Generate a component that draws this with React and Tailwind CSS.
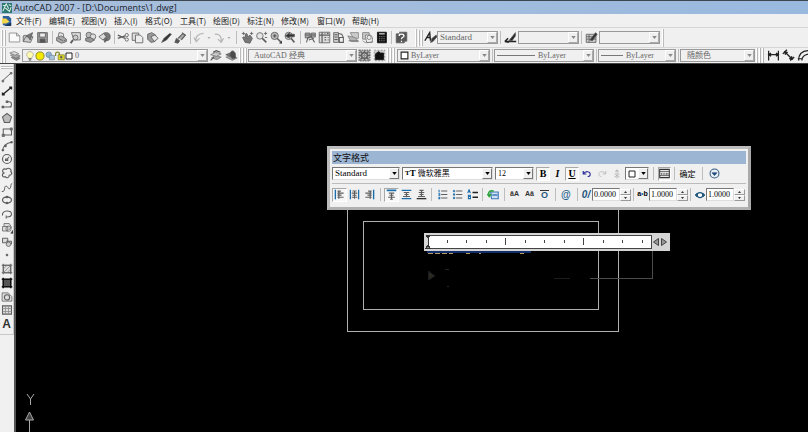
import React from "react";

const cx = (...v) => v.filter(Boolean).join(" ");

/* all glyphs live on a 16 x 16 grid */
const GLYPHS = {
  new: <path d="M1.500 2.500h9l4 3.500v7.500h-13z M10.500 2.500V6h4" fill="#fafafa" stroke="#858585" />,
  open: (
    <>
      <path d="M1.500 13V6l3-1 1 1h5v2M1.500 13l3-6h9l-3 7z" fill="#ccc" />
      <path d="M5 6l8-4-3 9-2-3z" fill="#777" />
    </>
  ),
  save: (
    <>
      <path d="M2 2h12v12H2z" fill="#999" />
      <path d="M4.500 2.500h7v5h-7z" fill="#eee" />
      <path d="M5 10h6v4H5z" fill="#555" />
    </>
  ),
  print: (
    <>
      <path d="M4 7l1-5 5 1 1 5" fill="#eee" />
      <path d="M2 8l6-2 6 4v3l-6 2-6-3z" fill="#aaa" />
      <path d="M4 9l6 3M11 12l2-1" />
    </>
  ),
  preview: (
    <>
      <path d="M3 2h11v9H6z" fill="#ddd" />
      <circle cx="8" cy="8" r="3" fill="#ccc" />
      <path d="M5 11l-3 4" strokeWidth="2.400" />
    </>
  ),
  publish: (
    <>
      <circle cx="6" cy="5" r="3.500" fill="#bbb" />
      <circle cx="11" cy="7" r="3.500" fill="#ddd" />
      <path d="M2 9l6-1 5 3-5 3-6-2z" fill="#999" />
    </>
  ),
  globe: (
    <>
      <circle cx="10" cy="7" r="5" fill="#777" />
      <path d="M1 7l6-4 3 4-4 4z" fill="#ddd" />
      <path d="M8 14l3-5" strokeWidth="2" />
    </>
  ),
  cut: (
    <>
      <path d="M1 5l9 4M1 9l9-3" strokeWidth="1.600" />
      <circle cx="12" cy="5" r="2" />
      <circle cx="12" cy="10.500" r="2" />
    </>
  ),
  copy: (
    <>
      <path d="M1.500 2.500h8v9h-8z" fill="#ddd" />
      <path d="M5.500 5h6l3 3v6.500h-9z" fill="#eee" />
    </>
  ),
  paste: (
    <>
      <path d="M2 4l5-2 5 3-1 8-5 1-4-4z" fill="#999" />
      <path d="M6 7l5-2 4 4-5 4z" fill="#e5e5e5" />
    </>
  ),
  match: <path d="M2 14l3-5 7-6 2 1-6 7z" fill="#333" />,
  brush: (
    <>
      <path d="M1 14l2-5 4 3-2 3z" fill="#555" />
      <path d="M5 9l6-6 3 2-5 6M10 2l4 4" fill="#aaa" strokeWidth="1.500" />
    </>
  ),
  undoGrey: <path d="M4 14C2 7 7 3 13 3M1 8l3 5 4-4" stroke="#b5b5b5" strokeWidth="1.500" />,
  redoGrey: <path d="M2 4c6-1 9 3 8 9M6 10l4 4 3-5" stroke="#b5b5b5" strokeWidth="1.500" />,
  pan: (
    <>
      <path d="M5 14L2 8l2-1 2 2-1-5 2-1 2 4 2-2 3 4-3 6z" fill="#777" />
      <path d="M1 3h4M3 1v4M11 3h4M13 1v4" />
    </>
  ),
  zoomIn: (
    <>
      <circle cx="6" cy="6" r="4" fill="#e5e5e5" />
      <path d="M9 9l5 5" strokeWidth="2" />
      <path d="M11 3h4M13 1v4M12 8h3" />
    </>
  ),
  zoomWin: (
    <>
      <circle cx="7" cy="6" r="4.500" fill="#bbb" />
      <path d="M5 6h4M7 4v4M10 9l5 5" strokeWidth="1.800" />
      <path d="M13 15h3v-3z" fill="#111" />
    </>
  ),
  zoomPrev: (
    <>
      <circle cx="7" cy="6" r="4.500" fill="#ccc" />
      <path d="M10 9l4 5" strokeWidth="2" />
      <path d="M3 6l5-4v2h6v3H8v2z" fill="#333" />
    </>
  ),
  props: (
    <>
      <path d="M1.500 2.500h6v6h-6zM9 2.500h5v5H9z" fill="#aaa" />
      <path d="M3 14l2-6 4-1 4 7M1 5h13M6 11l6-2" strokeWidth="1.300" />
    </>
  ),
  design: (
    <>
      <path d="M1.500 1.500h13v13h-13z" fill="#ddd" />
      <path d="M1.500 5h13M5 1.500v13M8 8h2M12 8h1M8 11h2M12 11h1M8 3h1M11 3h2" strokeWidth="1.500" />
    </>
  ),
  palette: (
    <>
      <path d="M2 2h6v12H2z" fill="#ccc" />
      <path d="M3 4.500h4M3 7.500h4M3 10.500h4M8 3l4 1 2 4M14 14H9V8h5z" strokeWidth="1.300" />
    </>
  ),
  sheetset: (
    <g stroke="#808080">
      <path d="M4 2h10v7H8z" fill="#ccc" />
      <path d="M1 6l9 2 4 5H5z" fill="#b5b5b5" />
      <path d="M2 12h12" strokeWidth="1.500" />
    </g>
  ),
  markup: (
    <g stroke="#777">
      <path d="M2 2h8v8H2z" fill="#ccc" />
      <path d="M5 5h7l2 3v6H7z" fill="#eee" />
      <circle cx="10" cy="8" r="2.500" />
      <path d="M2 12c3 3 7 3 12 1" />
    </g>
  ),
  calc: (
    <>
      <path d="M3 1.500h11v13H3z" fill="#111" stroke="#111" />
      <path d="M5 3.500h7" stroke="#ddd" strokeWidth="1.500" />
      <path d="M5 7h7M5 9.500h7M5 12h7" stroke="#999" strokeDasharray="1.500 1.200" />
    </>
  ),
  help: (
    <>
      <path d="M1.500 3.500h10v11h-10zM5 1.500h9.500v11H12" fill="#555" />
      <path d="M5 6c0-3 6-3 6 0 0 2-3 1.500-3 4M8 12v1.500" stroke="#fff" strokeWidth="1.600" />
    </>
  ),
  textStyle: (
    <>
      <path d="M1 12L7 2l1 10M4 8h4" stroke="#222" strokeWidth="1.700" />
      <path d="M8 14l2-5 5-4 1 2-5 6z" fill="#333" />
    </>
  ),
  dimStyle: (
    <>
      <path d="M1 13h14M1 13l4-4M1 13l5 1" stroke="#222" strokeWidth="1.800" />
      <path d="M6 12l8-10v4l-4 6z" fill="#222" />
    </>
  ),
  tableStyle: (
    <>
      <path d="M1.500 4h12v10h-12zM1.500 7h12M5 4v10M1.500 10h12" fill="#ccc" />
      <path d="M6 11l7-9 2 2-6 8z" fill="#333" />
    </>
  ),
  layers: (
    <g stroke="#777">
      <path d="M3 10l6-2 6 3-5 3z" fill="#888" />
      <path d="M2 7l6-2 7 3-6 3z" fill="#aaa" />
      <path d="M1 4l6-2 6 3-5 2z" fill="#ddd" />
    </g>
  ),
  layerPrev: (
    <g stroke="#777">
      <path d="M3 11l5-3 7 2-5 3z" fill="#aaa" />
      <path d="M2 7l6-3 7 2-6 3z" fill="#ccc" />
      <path d="M5 4l4-2 5 2M2 14l4-4" stroke="#555" strokeWidth="1.500" />
    </g>
  ),
  layerState: (
    <>
      <path d="M1 10l6-2 8 3-6 3z" fill="#999" stroke="#888" />
      <path d="M6 8c0-8 7-7 7 0v3l-4 1z" fill="#4a4a4a" />
      <path d="M1 7l5-2v4z" fill="#777" />
    </>
  ),
  bulb: (
    <>
      <path d="M5 10C0 6 4 1 8 1s8 5 3 9v2H5z" fill="#fffbb0" stroke="#998" />
      <path d="M6 12.500h4M6 14.500h4" stroke="#555" strokeWidth="1.500" />
    </>
  ),
  sun: <circle cx="8" cy="8" r="6.500" fill="#f5e800" stroke="#8b8a30" strokeWidth="1.500" />,
  freeze: (
    <>
      <circle cx="6" cy="6" r="4.500" fill="#8fb4d4" stroke="#5d7b97" />
      <path d="M7 7h8v7H7z" fill="#a9c4da" stroke="#6c8294" />
    </>
  ),
  lock: (
    <>
      <path d="M1 8V4c0-3 6-3 6 0v3" stroke="#888833" strokeWidth="2" />
      <path d="M5 6h10v8H5z" fill="#dcd92b" stroke="#77751e" />
      <circle cx="10" cy="10" r="1.500" fill="#555" />
    </>
  ),
  swatch: <path d="M2 2h12v12H2z" fill="#fff" stroke="#222" strokeWidth="2" />,
  gear: (
    <>
      <path d="M1.500 1.500h13v13h-13z" fill="#bbb" stroke="#777" strokeDasharray="2 1" strokeWidth="2" />
      <path d="M3 3l10 10M13 3L3 13M8 2v12M2 8h12" strokeWidth="1.800" />
      <circle cx="8" cy="8" r="3.500" fill="#ccc" strokeWidth="1.800" />
      <circle cx="8" cy="8" r="1" />
    </>
  ),
  myspace: (
    <>
      <path d="M1.500 1.500h13v13h-13z" fill="#ccc" stroke="#888" strokeDasharray="2 2" />
      <path d="M3 13V6l3-2 1-1 2 2h4v8z" fill="#111" stroke="#111" />
    </>
  ),
  dimLinear: <path d="M2 2v12M14 2v12M2 7h12M5 5L2 7l3 2M11 5l3 2-3 2" stroke="#222" strokeWidth="1.500" />,
  dimAligned: (
    <>
      <path d="M1 6l5-5M10 14l5-4M4 4l8 8" stroke="#222" strokeWidth="1.700" />
      <path d="M3 3l4 1-3 3zM13 13l-4-1 3-3z" fill="#222" stroke="#222" />
    </>
  ),
  dimArc: <path d="M2 14C2 6 6 2 15 2M6 14c0-4 3-7 9-8M1 12h6" stroke="#222" strokeWidth="1.500" />,
  line: <path d="M2 13L13 3M1.500 12.500h2v2h-2zM12.500 2h2v2h-2z" strokeWidth="1.300" />,
  xline: <path d="M2 13L14 3M2 10v3h3M11 3h3v3" stroke="#222" strokeWidth="1.800" />,
  pline: <path d="M2 12h12M8 5h3c4 0 4 7 0 7M1.500 11h2v2h-2zM7 4h2v2H7z" strokeWidth="1.400" />,
  polygon: <path d="M8 2l6 4.500-2.500 7.500h-7L2 6.500z" fill="#bbb" strokeWidth="1.400" />,
  rect: (
    <>
      <path d="M3 4h11v8H3z" strokeWidth="1.400" />
      <path d="M1.500 11h3v3h-3zM12.500 2.500h2.500v3h-2.500z" fill="#777" />
    </>
  ),
  arc: (
    <>
      <path d="M2 14C3 8 7 4 14 3" strokeWidth="1.400" />
      <path d="M1.500 12.500h2v2h-2zM5 7h2v2H5zM13 2h2v2h-2z" fill="#444" />
    </>
  ),
  circle: (
    <>
      <circle cx="8" cy="8" r="6" strokeWidth="1.500" />
      <path d="M7 9l4-4M6 8h3v2H6z" strokeWidth="1.400" />
    </>
  ),
  cloud: <path d="M4 8C0 6 3 1 7 3c3-3 8 0 6 3 3 3 0 5-2 5 0 4-4 4-5 2-4 1-6-3-2-5z" strokeWidth="1.500" />,
  spline: <path d="M1 14c6 1 2-8 6-7 3 0 2 5 5 3 2-2 0-6 3-7" strokeWidth="1.300" />,
  ellipse: (
    <>
      <ellipse cx="8" cy="8" rx="6" ry="4" strokeWidth="1.700" />
      <path d="M7 3h2v2H7zM7 11h2v2H7z" fill="#444" />
    </>
  ),
  ellipseArc: <path d="M2 9c-1-6 12-7 12-1 0 3-3 4-6 4M7 10v4M2 8v2" strokeWidth="1.500" />,
  insert: (
    <>
      <path d="M2 6h7v6H2zM4 6V2h7l3 5-4 4" fill="#ddd" />
      <circle cx="10" cy="9" r="3.500" />
      <path d="M13 15h3v-4z" fill="#111" />
    </>
  ),
  block: (
    <>
      <path d="M2 3h7v6H2zM7 7h7v4" fill="#ddd" strokeWidth="1.300" />
      <circle cx="10" cy="11" r="3" fill="#ccc" />
    </>
  ),
  point: <path d="M7 7h2v2H7z" fill="#333" />,
  hatch: (
    <>
      <path d="M3 3h10v10H3z" fill="#ddd" />
      <path d="M3 1v14M13 1v14M1 3h14M1 13h14" strokeWidth="1.400" />
      <path d="M3 8l5-5M3 13L13 3M8 13l5-5" stroke="#888" />
    </>
  ),
  gradient: (
    <>
      <path d="M3 3h10v10H3z" fill="#555" />
      <path d="M3 1v14M13 1v14M1 3h14M1 13h14" stroke="#111" strokeWidth="2" />
    </>
  ),
  region: (
    <>
      <path d="M1.500 2.500h8l5 5v6h-13z" fill="#ddd" />
      <circle cx="8" cy="8.500" r="3.500" strokeWidth="1.400" />
    </>
  ),
  table: (
    <>
      <path d="M2 2.500h12v11H2z" fill="#ddd" strokeWidth="1.400" />
      <path d="M2 6h12M2 10h12M6 3v11M10 3v11" stroke="#888" />
    </>
  ),
  undo: <path d="M2 3v5h5M2 8c4-6 12-4 11 1 0 2-2 3-4 3" stroke="#2b2e96" strokeWidth="1.900" />,
  redo: <path d="M14 3v5H9M14 8C10 2 2 4 3 9c0 2 2 3 4 3" stroke="#bdbdbd" strokeWidth="1.500" />,
  stack: <path d="M8 1v5M4 8h8M5 4l3-2 3 2M8 10v5M4 13l4-3 4 3" stroke="#b0b0b0" strokeWidth="1.500" />,
  ruler: (
    <>
      <path d="M1 2h14v12H1z" fill="#eee" stroke="#333" strokeWidth="1.500" />
      <path d="M1 5h14M1 11h14M3.500 7v3M6 7v3M8.500 7v3M11 7v3M13 7v3" stroke="#333" />
    </>
  ),
  options: (
    <>
      <circle cx="8" cy="8" r="6.500" stroke="#345b86" strokeWidth="1.500" fill="#e8eef5" />
      <path d="M4.500 7l3.500 4 3.500-4z" fill="#204a78" stroke="#204a78" />
    </>
  ),
  alignLeft: (
    <>
      <path d="M2 1v14" stroke="#1c6dab" strokeWidth="2" />
      <path d="M5 3h5M5 6h9M5 9h6M5 12h9M7 2v12" strokeWidth="1.700" />
    </>
  ),
  alignCenter: (
    <>
      <path d="M2 1v14M14 1v14" stroke="#1c6dab" strokeWidth="1.800" />
      <path d="M5 3h6M4 6h8M5 9h6M4 12h8M8 2v12" strokeWidth="1.500" />
    </>
  ),
  alignRight: (
    <>
      <path d="M14 1v14" stroke="#1c6dab" strokeWidth="2" />
      <path d="M6 3h5M2 6h9M5 9h6M2 12h9M9 2v12" strokeWidth="1.700" />
    </>
  ),
  top: (
    <>
      <path d="M1 2h14" stroke="#1c6dab" strokeWidth="2.500" />
      <path d="M4 6h8M5 9h6M3 12h10M6 15h4M8 5v10" strokeWidth="1.600" />
    </>
  ),
  middle: (
    <>
      <path d="M1 2h14M1 14h14" stroke="#1c6dab" strokeWidth="2" />
      <path d="M4 5h8M5 8h6M3 11h10M8 5v7" strokeWidth="1.600" />
    </>
  ),
  bottom: (
    <>
      <path d="M1 14h14" stroke="#333" strokeWidth="2" />
      <path d="M5 2h6M4 5h8M5 8h6M3 11h10M8 2v9" strokeWidth="1.600" />
    </>
  ),
  numbered: (
    <>
      <path d="M6 3h9M6 8h9M6 13h9" strokeWidth="1.500" />
      <path d="M3 1v4M2 7h2v2H2M2 12h2v2H2" stroke="#1c6dab" strokeWidth="1.500" />
    </>
  ),
  bullets: (
    <>
      <path d="M6 3h9M6 8h9M6 13h9" strokeWidth="1.500" />
      <path d="M2 2h2v2H2zM2 7h2v2H2zM2 12h2v2H2z" fill="#1c6dab" stroke="#1c6dab" />
    </>
  ),
  letters: (
    <>
      <path d="M8 5h8M8 12h8" stroke="#222" strokeWidth="2.200" />
      <path d="M1 6l2-5 2 5M2 4h2M2 9h3v5H2zM2 11h3" stroke="#1c6dab" strokeWidth="1.500" />
    </>
  ),
  field: (
    <>
      <path d="M5 4h10v9H6z" fill="#cfe1f5" stroke="#3d78b8" strokeWidth="1.500" />
      <path d="M7 8h7" stroke="#3d78b8" strokeWidth="2" />
      <path d="M9 3C5 1 2 3 2 7" stroke="#25a035" strokeWidth="2" />
      <path d="M0 7h6l-3 4z" fill="#25a035" stroke="#25a035" />
    </>
  ),
  width: (
    <>
      <ellipse cx="8" cy="8" rx="4.500" ry="4" stroke="#1f557d" strokeWidth="2" fill="#fff" />
      <path d="M3 5L0 8l3 3zM13 5l3 3-3 3z" stroke="#1f557d" fill="#1f557d" />
    </>
  ),
};

const Icon = ({ name, className = "size-[13px]" }) => (
  <svg viewBox="0 0 16 16" className={cx("shrink-0", className)} fill="none" stroke="#5e5e5e" strokeWidth="1" aria-hidden="true">
    {GLYPHS[name]}
  </svg>
);

const Tool = ({ name, className = "flex-1", children, pressed, size }) => (
  <button
    type="button"
    aria-label={name}
    className={cx(
      "flex h-[14px] min-w-0 items-center justify-center",
      pressed && "border border-[#a8a8a8] border-r-white border-b-white bg-[#f7f7f7]",
      className
    )}
  >
    {children || <Icon name={name} className={size} />}
  </button>
);

const Group = ({ names, className }) => (
  <div className={cx("flex shrink-0 items-center", className)}>
    {names.map((n) => <Tool key={n} name={n} />)}
  </div>
);

const Sep = ({ className = "w-1" }) => (
  <div className={cx("flex h-[13px] shrink-0 justify-center", className)}>
    <div className="w-px bg-[#bdbdbd]" />
  </div>
);

const Grip = () => (
  <div className="flex h-4 w-[7px] shrink-0 items-stretch justify-center gap-px">
    <div className="w-[2px] border-r border-[#b5b5b5] bg-white" />
    <div className="w-[2px] border-r border-[#b5b5b5] bg-white" />
  </div>
);

const End = () => <div className="h-[18px] w-[2px] shrink-0 border-r border-[#bbb] bg-white" />;

const Arrow = ({ dark }) => (
  <span className={cx(
    "pointer-events-none flex w-[10px] shrink-0 items-center justify-center border border-t-white border-l-white bg-[#efefef]",
    dark ? "border-[#777]" : "border-[#aaa]"
  )}>
    <svg viewBox="0 0 6 4" className="h-[3px] w-[5px]"><path d="M0 0h6L3 4z" fill={dark ? "#000" : "#888"} /></svg>
  </span>
);

const Combo = ({ label, value, className, children, dark, text = "text-[8px]" }) => (
  <label className={cx(
    "flex h-[13px] shrink-0 items-stretch border",
    dark ? "border-[#777] border-r-[#ddd] border-b-[#ddd] bg-white text-black" : "border-[#999] bg-[#f0f0f0] text-[#666]",
    className
  )}>
    {children && <span className="flex items-center pl-[2px]">{children}</span>}
    <select
      aria-label={label}
      className={cx("min-w-0 flex-1 appearance-none bg-transparent pl-[2px] font-['Liberation_Serif','Noto_Sans_CJK_SC',serif] leading-[11px] outline-none", text)}
    >
      <option>{value}</option>
    </select>
    <Arrow dark={dark} />
  </label>
);

const Drop = () => (
  <button type="button" aria-label="more" className="flex w-[6px] shrink-0 justify-center">
    <svg viewBox="0 0 6 4" className="h-[2px] w-[4px]"><path d="M0 0h6L3 4z" fill="#aaa" /></svg>
  </button>
);

const Spin = ({ label, value }) => (
  <>
    <input
      aria-label={label}
      defaultValue={value}
      className="h-[13px] w-[28px] shrink-0 border border-[#777] border-r-[#ddd] border-b-[#ddd] bg-white pl-px font-['Liberation_Serif',serif] text-[8px] outline-none"
    />
    <span className="flex w-[11px] shrink-0 flex-col">
      {["M0 4h6L3 0z", "M0 0h6L3 4z"].map((d) => (
        <button key={d} type="button" aria-label={label} className="flex h-[6px] items-center justify-center border border-[#999] border-t-white border-l-white">
          <svg viewBox="0 0 6 4" className="h-[2px] w-[3px]"><path d={d} fill="#333" /></svg>
        </button>
      ))}
    </span>
  </>
);

const MENUS = [
  ["文件(F)", "w-[33px]"], ["编辑(E)", "w-[32px]"], ["视图(V)", "w-[33px]"], ["插入(I)", "w-[31px]"],
  ["格式(O)", "w-[35px]"], ["工具(T)", "w-[33px]"], ["绘图(D)", "w-[34px]"], ["标注(N)", "w-[34px]"],
  ["修改(M)", "w-[36px]"], ["窗口(W)", "w-[35px]"], ["帮助(H)", "w-[33px]"],
];

const DRAW_TOOLS = [
  "line", "xline", "pline", "polygon", "rect", "arc", "circle", "cloud", "spline", "ellipse",
  "ellipseArc", "insert", "block", "point", "hatch", "gradient", "region", "table",
];

function TitleBar() {
  return (
    <header className="flex h-[14px] items-center gap-[2px] border-t border-[#3e4650] bg-gradient-to-r from-[#a8bfdb] to-[#9ab9df] pl-[2px]">
      <svg viewBox="0 0 12 12" className="size-[10px]">
        <path d="M0 0h12v12H0z" fill="#2d7773" />
        <path d="M1 10L5 1l3 6M4 6l5 4 2-5M1 3h3M8 2l3 1" stroke="#d5ecdf" strokeWidth="1.300" fill="none" />
      </svg>
      <h1 className="font-['Open_Sans',sans-serif] text-[9px] leading-[13px] text-[#1a222c]">AutoCAD 2007 - [D:\Documents\1.dwg]</h1>
    </header>
  );
}

function MenuBar() {
  return (
    <nav className="flex h-[13px] items-center pl-[2px]">
      <svg viewBox="0 0 12 12" className="mr-[4px] size-[10px] shrink-0">
        <path d="M1 0h7l3 3v8H1z" fill="#2e5f9b" />
        <path d="M0 3h5l4 4-4 2H0z" fill="#f4d64c" />
        <path d="M2 12l9-4v4z" fill="#17365f" />
      </svg>
      {MENUS.map(([t, w]) => (
        <button key={t} type="button" className={cx("shrink-0 text-left font-['Noto_Sans_CJK_SC',sans-serif] text-[8px] leading-[12px] whitespace-nowrap text-[#222]", w)}>
          {t}
        </button>
      ))}
    </nav>
  );
}

function StandardBar() {
  return (
    <div className="flex h-5 items-center overflow-hidden border-t border-[#d5d5d5]">
      <Grip />
      <Group names={["new", "open", "save"]} className="w-[43px]" />
      <Sep />
      <Group names={["print", "preview", "publish", "globe"]} className="w-[58px]" />
      <Sep />
      <Group names={["cut", "copy", "paste", "match", "brush"]} className="w-[72px]" />
      <Sep />
      <Tool name="undoGrey" className="w-[14px] shrink-0" />
      <Drop />
      <Tool name="redoGrey" className="w-[14px] shrink-0" />
      <Drop />
      <Sep className="w-[8px]" />
      <Group names={["pan", "zoomIn", "zoomWin", "zoomPrev"]} className="w-[57px]" />
      <Sep className="w-[6px]" />
      <Group names={["props", "design", "palette", "sheetset", "markup", "calc"]} className="w-[86px]" />
      <Sep />
      <Group names={["help"]} className="mr-[7px] ml-px w-[14px]" />
      <End />
      <Grip />
      <Tool name="textStyle" className="w-[13px] shrink-0" />
      <Combo label="text style" value="Standard" className="w-[61px]" text="text-[9px]" />
      <Sep />
      <Tool name="dimStyle" className="w-[16px] shrink-0" />
      <Combo label="dimension style" value="" className="w-[61px]" />
      <Sep />
      <Tool name="tableStyle" className="w-[16px] shrink-0" />
      <Combo label="table style" value="" className="mr-[2px] w-[61px]" />
      <End />
    </div>
  );
}

function LayerBar() {
  return (
    <div className="flex h-4 items-center overflow-hidden border-t border-[#d5d5d5]">
      <Grip />
      <Tool name="layers" className="w-[15px] shrink-0" size="size-[12px]" />
      <Combo label="layer" value="0" className="w-[186px]">
        {["bulb", "sun", "freeze", "lock"].map((n) => <Icon key={n} name={n} className="size-[10px]" />)}
        <Icon name="swatch" className="size-[8px]" />
      </Combo>
      <Group names={["layerPrev", "layerState"]} className="w-[31px]" />
      <End />
      <Grip />
      <Combo label="workspace" value="AutoCAD 经典" className="w-[109px]">
        <span className="w-px" />
      </Combo>
      <Group names={["gear", "myspace"]} className="w-[30px]" />
      <End />
      <Grip />
      <Combo label="color" value="ByLayer" className="ml-px w-[93px]">
        <Icon name="swatch" className="size-[9px]" />
      </Combo>
      <Sep />
      <Combo label="linetype" value="ByLayer" className="w-[100px]">
        <span className="mr-px h-px w-[38px] bg-[#777]" />
      </Combo>
      <Sep />
      <Combo label="lineweight" value="ByLayer" className="w-[78px]">
        <span className="mr-px h-px w-[22px] bg-[#777]" />
      </Combo>
      <Sep />
      <Combo label="plot style" value="随颜色" className="mr-px w-[75px]">
        <span className="w-[2px]" />
      </Combo>
      <End />
      <Grip />
      <Group names={["dimLinear", "dimAligned", "dimArc"]} className="ml-px w-[45px]" />
    </div>
  );
}

function DrawBar() {
  return (
    <aside className="w-4 shrink-0 border-r-2 border-r-[#555] bg-[#f0f0f0]">
      <div className="flex h-[271px] flex-col items-center border-r border-b border-[#c8c8c8] pb-[3px]">
        <div className="mt-[2px] mb-px h-[3px] w-[12px] shrink-0 border-y border-[#bbb] bg-white" />
        {DRAW_TOOLS.map((n) => (
          <button key={n} type="button" aria-label={n} className="flex min-h-0 flex-1 items-center justify-center">
            <Icon name={n} className="size-[12px]" />
          </button>
        ))}
        <button type="button" className="flex min-h-0 flex-1 items-center font-['Liberation_Sans',sans-serif] text-[12px] font-bold text-[#333]">A</button>
      </div>
    </aside>
  );
}

function TextFormat() {
  return (
    <section className="absolute top-[82px] left-[311px] w-[424px] border-3 border-[#bdbdbd] border-r-[#a9a9a9] border-b-[#b0b0b0] bg-[#f0f0f0] p-[2px]">
      <h2 className="h-[13px] bg-[#9bb5d3] pl-px font-['Noto_Sans_CJK_SC',sans-serif] text-[9px] leading-[14px] text-[#111]">文字格式</h2>
      <div className="flex h-[20px] items-center border-b border-[#bbb]">
        <Combo dark label="style" value="Standard" className="mr-[2px] w-[68px]" text="text-[9px]" />
        <Combo dark label="font" value="微软雅黑" className="mr-[2px] w-[91px]">
          <b className="font-['Liberation_Serif',serif] text-[7px]">T</b>
          <b className="font-['Liberation_Serif',serif] text-[9px]">T</b>
        </Combo>
        <Combo dark label="height" value="12" className="mr-[2px] w-[39px]" />
        <Tool name="bold" pressed className="w-[14px] shrink-0">
          <b className="font-['Liberation_Serif',serif] text-[10px]">B</b>
        </Tool>
        <Tool name="italic" className="w-[15px] shrink-0">
          <b className="font-['Liberation_Serif',serif] text-[10px] italic">I</b>
        </Tool>
        <Tool name="underline" pressed className="w-[14px] shrink-0">
          <b className="font-['Liberation_Serif',serif] text-[10px] underline">U</b>
        </Tool>
        <Tool name="undo" className="w-[15px] shrink-0" size="size-[10px]" />
        <Tool name="redo" className="w-[16px] shrink-0" size="size-[10px]" />
        <Tool name="stack" className="mr-[2px] w-[13px] shrink-0" size="size-[10px]" />
        <Combo dark label="text color" value="" className="w-[24px]">
          <Icon name="swatch" className="size-[8px]" />
        </Combo>
        <Sep className="w-[9px]" />
        <Tool name="ruler" pressed className="w-[13px] shrink-0" size="size-[11px]" />
        <Sep className="w-[6px]" />
        <button type="button" className="w-[21px] shrink-0 font-['Noto_Sans_CJK_SC',sans-serif] text-[8px] whitespace-nowrap">确定</button>
        <Sep className="w-[9px]" />
        <Tool name="options" className="w-[14px] shrink-0" size="size-[11px]" />
      </div>
      <div className="flex h-[21px] items-center">
        <Tool name="alignLeft" pressed className="w-[15px] shrink-0" size="size-[11px]" />
        <Tool name="alignCenter" className="w-[15px] shrink-0" size="size-[11px]" />
        <Tool name="alignRight" className="w-[14px] shrink-0" size="size-[11px]" />
        <Sep className="w-[8px]" />
        <Tool name="top" pressed className="w-[15px] shrink-0" size="size-[11px]" />
        <Tool name="middle" className="w-[15px] shrink-0" size="size-[11px]" />
        <Tool name="bottom" className="w-[14px] shrink-0" size="size-[11px]" />
        <Sep className="w-[7px]" />
        <Tool name="numbered" className="w-[15px] shrink-0" size="size-[11px]" />
        <Tool name="bullets" className="w-[15px] shrink-0" size="size-[11px]" />
        <Tool name="letters" className="w-[14px] shrink-0" size="size-[11px]" />
        <Sep className="w-[6px]" />
        <Tool name="field" className="w-[16px] shrink-0" size="size-[12px]" />
        <Sep className="w-[6px]" />
        <Tool name="uppercase" className="w-[15px] shrink-0">
          <span className="font-['Liberation_Sans',sans-serif] text-[7px] font-bold text-[#333]">ăA</span>
        </Tool>
        <Tool name="lowercase" className="w-[15px] shrink-0">
          <span className="font-['Liberation_Sans',sans-serif] text-[7px] font-bold text-[#333]">Aă</span>
        </Tool>
        <Tool name="overline" className="w-[15px] shrink-0">
          <span className="border-t border-[#333] px-px font-['Liberation_Sans',sans-serif] text-[9px] leading-[9px] font-bold text-[#28597d]">O</span>
        </Tool>
        <Sep className="w-[6px]" />
        <Tool name="symbol" className="w-[16px] shrink-0">
          <span className="font-['Liberation_Sans',sans-serif] text-[10px] font-bold text-[#28648f]">@</span>
        </Tool>
        <Sep className="w-[6px]" />
        <span className="w-[12px] shrink-0 text-center font-['Liberation_Sans',sans-serif] text-[10px] font-bold text-[#1f557d] italic">0/</span>
        <Spin label="oblique angle" value="0.0000" />
        <Sep className="w-[5px]" />
        <span className="w-[13px] shrink-0 text-center font-['Liberation_Sans',sans-serif] text-[7px] font-bold">a<span className="text-[#1c6dab]">•</span>b</span>
        <Spin label="tracking" value="1.0000" />
        <Sep className="w-[5px]" />
        <span className="flex w-[13px] shrink-0 justify-center"><Icon name="width" className="size-[10px]" /></span>
        <Spin label="width factor" value="1.0000" />
      </div>
    </section>
  );
}

const TICKS = Array.from({ length: 11 }, (_, i) => i + 1);

function Drawing() {
  return (
    <svg width="792" height="368" className="absolute top-0 left-0" fill="none" stroke="#b0b0b0" shapeRendering="crispEdges">
      <rect x="331.500" y="100.500" width="271" height="167" />
      <rect x="347.500" y="157.500" width="235" height="88" />
      <path d="M636.500 187v27.500H574" stroke="#4b4b4b" />
      <path d="M554 214.500h-16" stroke="#1c1c1c" />
      {/* top edge of the clipped text line */}
      <path d="M411 188h104" stroke="#132f6b" strokeWidth="2" />
      <path d="M412 189.500h25M450 189.500h4M463 189.500h2M504 189.500h4" stroke="#b59c62" strokeDasharray="5 2" />
      <path d="M412 207v9l7-4z" stroke="#181b22" fill="#2c2a1e" />
      <path d="M429 205.500h4M431 222.500h2" stroke="#222" />
      {/* column ruler */}
      <rect x="408" y="169" width="246" height="18" fill="#d5d5d5" stroke="none" />
      <rect x="412.500" y="171.500" width="223" height="13" fill="#fff" stroke="#444" />
      {TICKS.map((i) => {
        const x = Math.round(411 + i * 19.5) + 0.5;
        return <path key={i} d={i % 4 === 0 ? `M${x} 174v7` : `M${x} 176v3`} stroke="#444" />;
      })}
      <path d="M410 171h4l-2 3zM410 184h4l-2-3zM412 173v9" stroke="#333" fill="#888" />
      <g shapeRendering="auto" stroke="#444" fill="#999">
        <path d="M642.500 174.500l-5 3.500 5 3.500zM645.500 174.500l5 3.500-5 3.500z" />
      </g>
    </svg>
  );
}

export default function App() {
  return (
    <div className="flex h-screen flex-col overflow-hidden bg-[#f0f0f0]">
      <TitleBar />
      <MenuBar />
      <StandardBar />
      <LayerBar />
      <div className="flex min-h-0 flex-1 border-t border-[#444]">
        <DrawBar />
        <main className="relative min-w-0 flex-1 overflow-hidden bg-black">
          <Drawing />
          <TextFormat />
          <svg viewBox="0 0 16 42" className="absolute bottom-0 left-[6px] h-[42px] w-4" fill="none" stroke="#aaa">
            <path d="M5 4l3.500 5L12 4M8.500 9v6" />
            <path d="M7.500 22l-4 8h8zM7.500 30v12" fill="#444" />
          </svg>
        </main>
      </div>
    </div>
  );
}
